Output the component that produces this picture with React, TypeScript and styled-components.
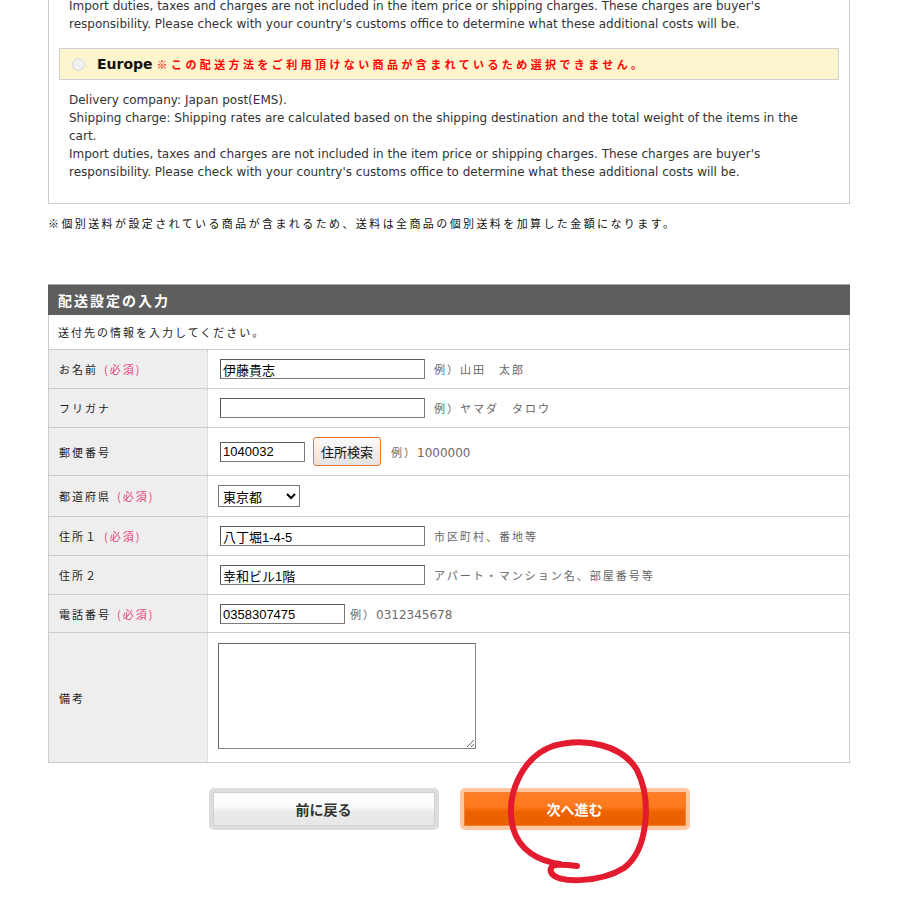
import React from 'react';
import styled, { createGlobalStyle } from 'styled-components';

const GlobalStyle = createGlobalStyle`
  body {
    margin: 0;
    background: #ffffff;
    color: #333333;
    font-family: "DejaVu Sans", "Noto Sans CJK JP", sans-serif;
  }
`;

const Screen = styled.div`
  position: relative;
  width: 900px;
  display: flow-root;
`;

const Page = styled.div`
  width: 802px;
  margin-left: 48px;
  display: flow-root;
  padding-bottom: 80px;
`;

const ShippingBox = styled.section`
  margin-top: -14px;
  border: 1px solid #cccccc;
  padding: 10px 20px 22px;
  font-size: 12px;
  line-height: 18px;
  color: #333333;
  > p {
    margin: 0;
  }
`;

const Option = styled.div`
  margin: 15px -10px 11px;
  height: 30px;
  border: 1px solid #d2d2d2;
  background: #fdf5cd;
  display: flex;
  align-items: center;
  padding-left: 12px;
`;

const Radio = styled.span`
  width: 11px;
  height: 11px;
  border-radius: 50%;
  border: 1px solid #d6d6d6;
  background: #f1f1f1;
  margin-right: 12px;
`;

const OptionName = styled.span`
  font-size: 14px;
  font-weight: bold;
  color: #111111;
`;

const OptionWarning = styled.span`
  margin-left: 4px;
  color: #ff0000;
  font-weight: bold;
  font-size: 11px;
  letter-spacing: 3.4px;
  font-family: "Noto Sans CJK JP", sans-serif;
`;

const Note = styled.p`
  margin: 10px 0 0;
  font-size: 11px;
  line-height: 18px;
  letter-spacing: 2.4px;
  color: #111111;
  font-family: "Noto Sans CJK JP", sans-serif;
`;

const FormTable = styled.section`
  margin-top: 52px;
  border: 1px solid #cccccc;
  border-top: none;
  font-family: "Noto Sans CJK JP", sans-serif;
`;

const FormHeader = styled.h2`
  margin: 0 -1px;
  height: 30px;
  line-height: 30px;
  border-top: 1px solid #a9a9a9;
  background: #5e5e5e;
  color: #ffffff;
  font-size: 14px;
  font-weight: bold;
  letter-spacing: 2px;
  padding-left: 10px;
`;

const Intro = styled.div`
  height: 34px;
  line-height: 34px;
  border-bottom: 1px solid #cccccc;
  padding-left: 9px;
  font-size: 11px;
  letter-spacing: 2px;
  color: #222222;
`;

const Row = styled.div`
  display: grid;
  grid-template-columns: 159px 1fr;
  border-bottom: 1px solid #cccccc;
  &:last-child {
    border-bottom: none;
  }
`;

const Label = styled.div`
  background: #eeeeee;
  border-right: 1px dotted #cccccc;
  display: flex;
  align-items: center;
  padding-left: 10px;
  font-size: 11px;
  letter-spacing: 2px;
  color: #222222;
`;

const Required = styled.span`
  margin-left: 6px;
  color: #e8417a;
`;

const Field = styled.div<{ $top?: number; $bottom?: number }>`
  display: flex;
  align-items: center;
  padding: ${p => p.$top ?? 9}px 12px ${p => p.$bottom ?? 9}px;
`;

const TextInput = styled.input<{ $width: number }>`
  box-sizing: border-box;
  width: ${p => p.$width}px;
  height: 20px;
  margin: 0;
  padding: 0 2px;
  border: 1px solid #7a7a7a;
  border-top-color: #5a5a5a;
  border-left-color: #5a5a5a;
  background: #ffffff;
  font-size: 13px;
  color: #000000;
  font-family: "Liberation Sans", "Noto Sans CJK JP", sans-serif;
`;

const Example = styled.span<{ $gap?: number }>`
  margin-left: ${p => p.$gap ?? 9}px;
  font-size: 11px;
  letter-spacing: 2px;
  color: #666666;
  > em {
    font-style: normal;
    letter-spacing: 0;
    font-size: 12px;
    color: #6e6a66;
    font-family: "DejaVu Sans", sans-serif;
  }
`;

const SearchButton = styled.button`
  height: 29px;
  width: 68px;
  margin-left: 8px;
  margin-right: 1px;
  padding: 0;
  border: 1px solid #e8742f;
  border-radius: 3px;
  background: linear-gradient(#fafafa, #e3e3e3);
  font-size: 13px;
  color: #111111;
  font-family: "Noto Sans CJK JP", sans-serif;
`;

const Select = styled.select`
  width: 82px;
  height: 22px;
  margin-left: -2px;
  font-size: 13px;
  color: #000000;
  border: 1px solid #767676;
  background: #ffffff;
  font-family: "Noto Sans CJK JP", sans-serif;
`;

const Remarks = styled.textarea`
  box-sizing: border-box;
  width: 258px;
  height: 106px;
  margin: 0 0 0 -2px;
  border: 1px solid #888888;
  border-top-color: #666666;
  border-left-color: #666666;
`;

const Actions = styled.div`
  display: flex;
  justify-content: center;
  gap: 21px;
  margin-top: 25px;
`;

const ActionButton = styled.button<{ $primary?: boolean }>`
  width: 230px;
  height: 42px;
  border-radius: 5px;
  border: 4px solid ${p => (p.$primary ? '#ffc7a0' : '#dddddd')};
  box-shadow: inset 0 0 0 1px ${p => (p.$primary ? '#f08033' : '#d0d0d0')};
  background: ${p =>
    p.$primary
      ? 'linear-gradient(#ff7e24 0%, #ff7a1e 42%, #ec6200 58%, #ea6000 100%)'
      : 'linear-gradient(#ffffff 0%, #fbfbfb 42%, #ebebeb 58%, #e7e7e7 100%)'};
  color: ${p => (p.$primary ? '#ffffff' : '#333333')};
  font-size: 14px;
  font-weight: bold;
  font-family: "Noto Sans CJK JP", sans-serif;
`;

const Annotation = styled.svg`
  position: absolute;
  left: 0;
  top: 0;
  pointer-events: none;
`;

function App() {
  return (
    <Screen>
      <GlobalStyle />
      <Page>
        <ShippingBox>
          <p>
            Import duties, taxes and charges are not included in the item price or shipping charges. These charges are buyer's
            <br />
            responsibility. Please check with your country's customs office to determine what these additional costs will be.
          </p>
          <Option>
            <Radio />
            <OptionName>Europe</OptionName>
            <OptionWarning>※この配送方法をご利用頂けない商品が含まれているため選択できません。</OptionWarning>
          </Option>
          <p>
            Delivery company: Japan post(EMS).
            <br />
            Shipping charge: Shipping rates are calculated based on the shipping destination and the total weight of the items in the
            <br />
            cart.
            <br />
            Import duties, taxes and charges are not included in the item price or shipping charges. These charges are buyer's
            <br />
            responsibility. Please check with your country's customs office to determine what these additional costs will be.
          </p>
        </ShippingBox>
        <Note>※個別送料が設定されている商品が含まれるため、送料は全商品の個別送料を加算した金額になります。</Note>

        <FormTable>
          <FormHeader>配送設定の入力</FormHeader>
          <Intro>送付先の情報を入力してください。</Intro>
          <Row>
            <Label>
              お名前<Required>(必須)</Required>
            </Label>
            <Field>
              <TextInput $width={205} defaultValue="伊藤貴志" />
              <Example>例）山田　太郎</Example>
            </Field>
          </Row>
          <Row>
            <Label>フリガナ</Label>
            <Field>
              <TextInput $width={205} defaultValue="" />
              <Example>例）ヤマダ　タロウ</Example>
            </Field>
          </Row>
          <Row>
            <Label>郵便番号</Label>
            <Field>
              <TextInput $width={85} defaultValue="1040032" />
              <SearchButton>住所検索</SearchButton>
              <Example>
                例）<em>1000000</em>
              </Example>
            </Field>
          </Row>
          <Row>
            <Label>
              都道府県<Required>(必須)</Required>
            </Label>
            <Field>
              <Select defaultValue="東京都">
                <option>東京都</option>
              </Select>
            </Field>
          </Row>
          <Row>
            <Label>
              住所１<Required>(必須)</Required>
            </Label>
            <Field>
              <TextInput $width={205} defaultValue="八丁堀1-4-5" />
              <Example>市区町村、番地等</Example>
            </Field>
          </Row>
          <Row>
            <Label>住所２</Label>
            <Field>
              <TextInput $width={205} defaultValue="幸和ビル1階" />
              <Example>アパート・マンション名、部屋番号等</Example>
            </Field>
          </Row>
          <Row>
            <Label>
              電話番号<Required>(必須)</Required>
            </Label>
            <Field $bottom={8}>
              <TextInput $width={125} defaultValue="0358307475" />
              <Example $gap={5}>
                例）<em>0312345678</em>
              </Example>
            </Field>
          </Row>
          <Row>
            <Label>備考</Label>
            <Field $top={10} $bottom={13}>
              <Remarks />
            </Field>
          </Row>
        </FormTable>

        <Actions>
          <ActionButton>前に戻る</ActionButton>
          <ActionButton $primary>次へ進む</ActionButton>
        </Actions>
      </Page>

      <Annotation width={900} height={906} viewBox="0 0 900 906">
        <path
          d="M 577 866 C 562 864 548 863 551 872 C 555 884 600 883 624 868 C 648 850 652 800 637 770 C 622 745 585 737 553 746 C 522 757 505 795 513 828 C 519 850 538 861 560 864"
          fill="none"
          stroke="#e31b2e"
          strokeWidth={6}
          strokeLinecap="round"
          strokeLinejoin="round"
        />
      </Annotation>
    </Screen>
  );
}

export default App;
